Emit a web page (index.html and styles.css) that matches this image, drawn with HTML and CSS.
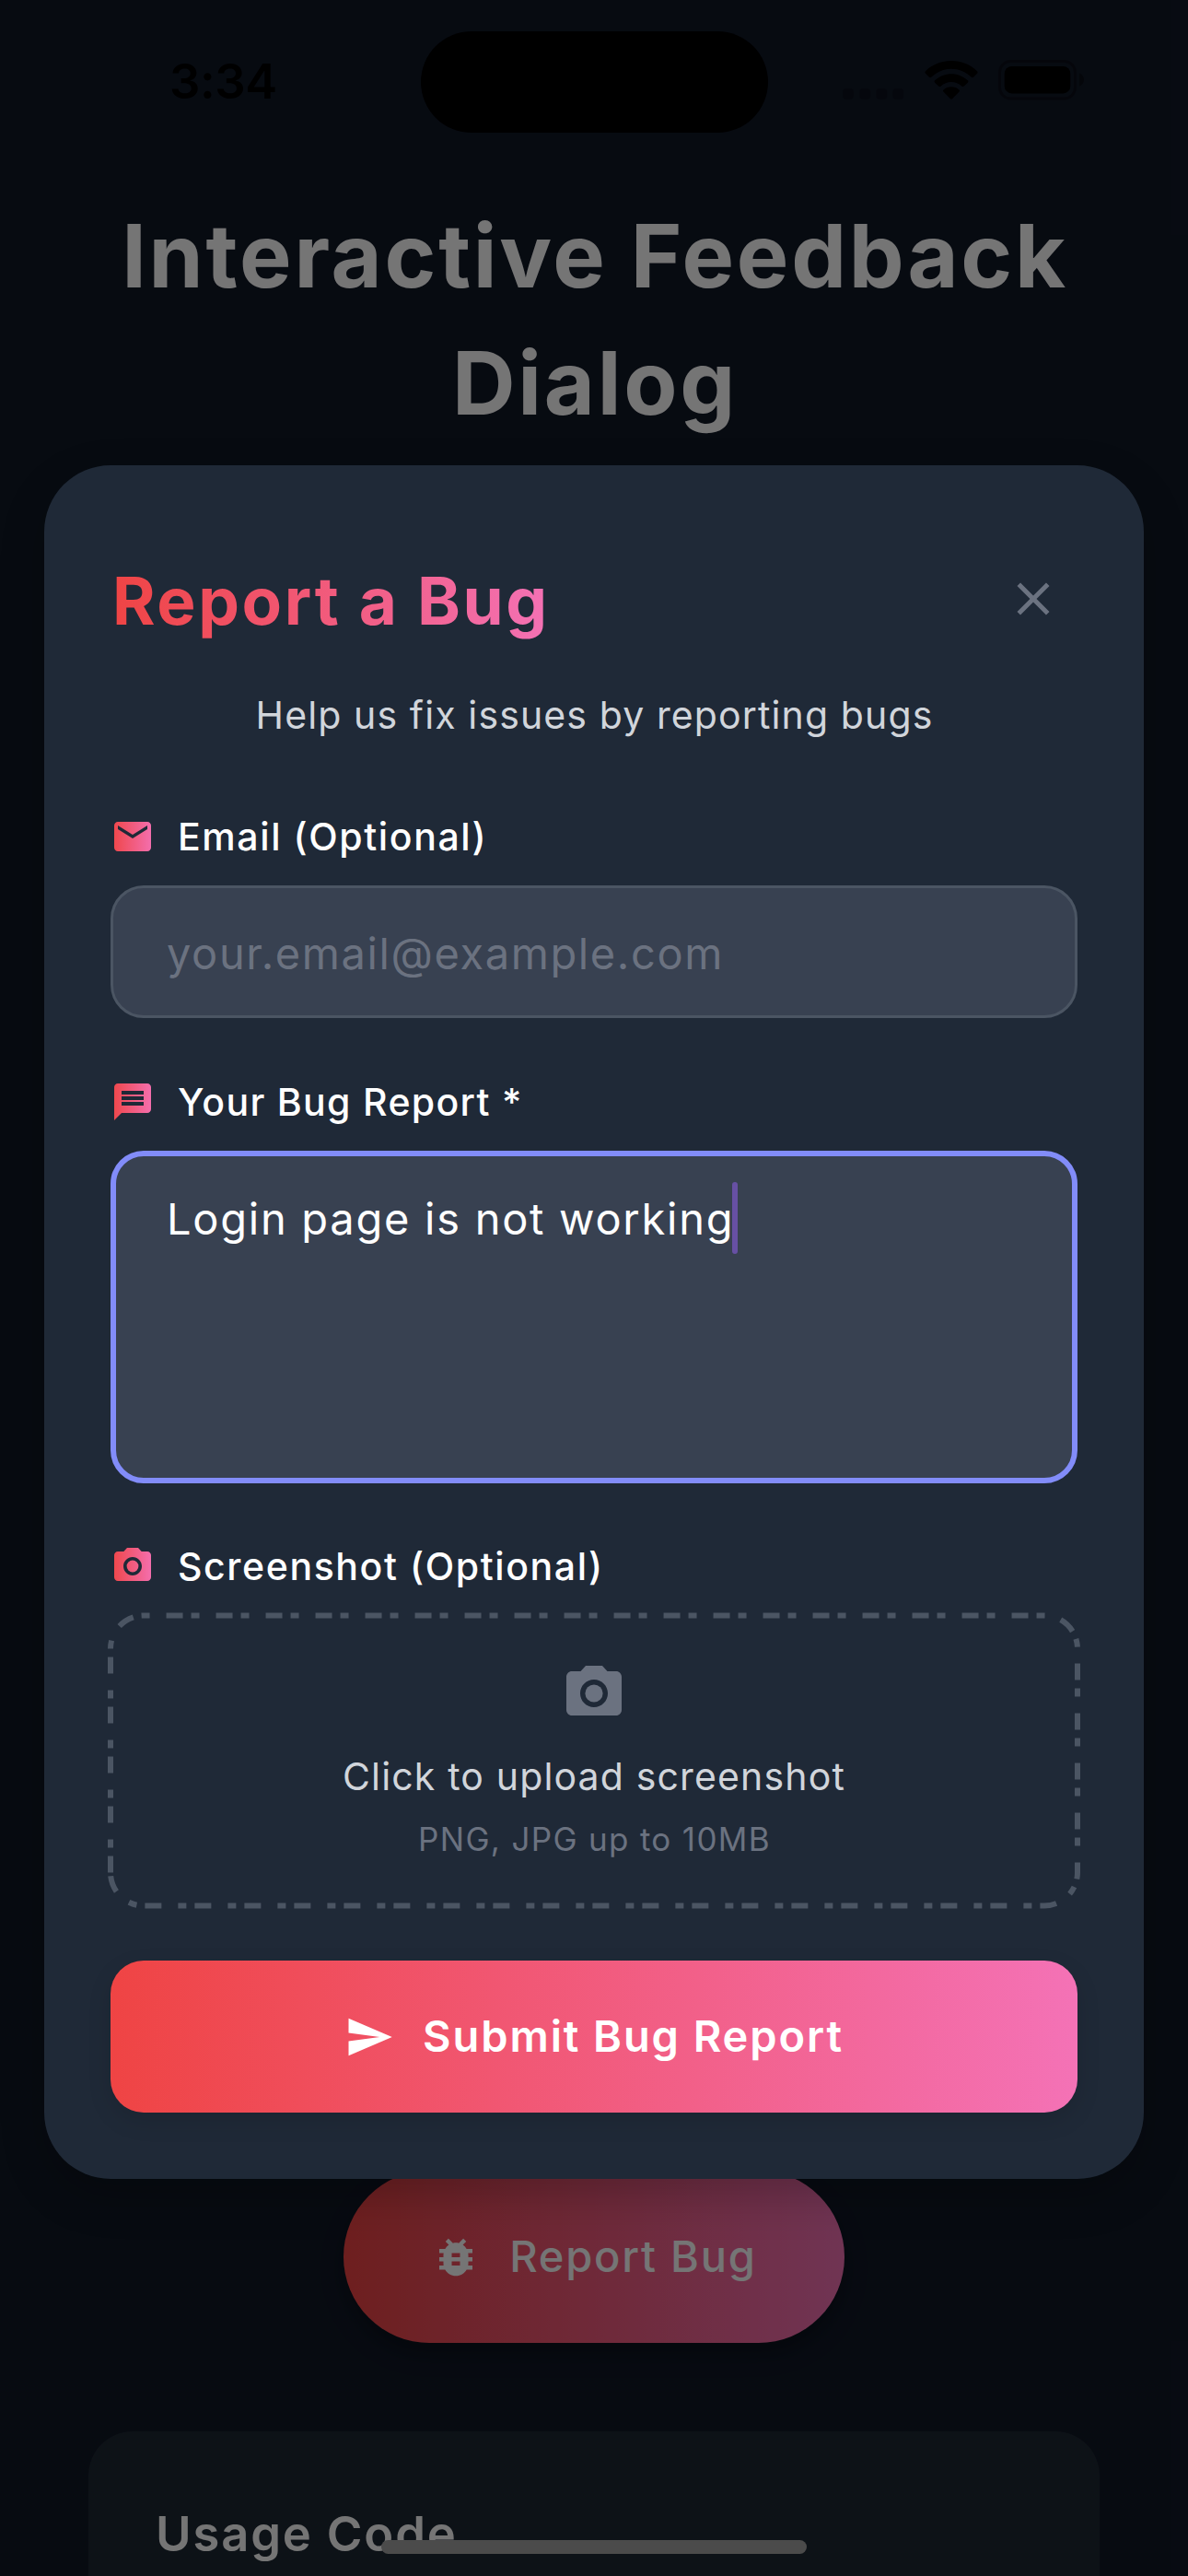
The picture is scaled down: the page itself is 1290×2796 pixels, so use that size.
FILE: index.html
```html
<!DOCTYPE html>
<html lang="en">
<head>
<meta charset="utf-8">
<title>Interactive Feedback Dialog</title>
<link rel="stylesheet" href="styles.css">
</head>
<body>
<svg class="defs" width="0" height="0" aria-hidden="true">
  <defs>
    <linearGradient id="accent" gradientUnits="userSpaceOnUse" x1="0" y1="0" x2="24" y2="0">
      <stop offset="0" stop-color="#ef4444"/>
      <stop offset="1" stop-color="#f472b6"/>
    </linearGradient>
    <symbol id="camera" viewBox="0 0 24 24">
      <circle cx="12" cy="12" r="3.2"/>
      <path d="M9 2L7.17 4H4c-1.1 0-2 .9-2 2v12c0 1.1.9 2 2 2h16c1.1 0 2-.9 2-2V6c0-1.1-.9-2-2-2h-3.17L15 2H9zm3 15c-2.76 0-5-2.24-5-5s2.24-5 5-5 5 2.24 5 5-2.24 5-5 5z"/>
    </symbol>
  </defs>
</svg>

<div class="screen">
  <main class="page">
    <header class="status-bar">
      <span class="time">3:34</span>
      <div class="island"></div>
      <div class="status-icons">
        <svg class="signal" viewBox="0 0 68 12" width="68" height="12"><rect x="0" y="0" width="12" height="12" rx="4"/><rect x="18.3" y="0" width="12" height="12" rx="4"/><rect x="36.3" y="0" width="12" height="12" rx="4"/><rect x="54.3" y="0" width="12" height="12" rx="4"/></svg>
        <svg class="wifi" viewBox="0 0 58 42" width="58" height="42">
          <path d="M29 0C40 0 50 4.300 57 11.200Q58.200 12.500 57 13.800L53 17.700Q51.800 18.700 50.500 17.600C44.500 12 37 8.800 29 8.800S13.500 12 7.500 17.600Q6.200 18.700 5 17.700L1 13.800Q-.2 12.500 1 11.200C8 4.300 18 0 29 0Z"/>
          <path d="M29 14.200C36 14.200 42 16.900 46.800 21.300Q48 22.500 46.800 23.700L42.800 27.600Q41.600 28.600 40.300 27.500C37.200 24.700 33.300 23 29 23S20.800 24.700 17.700 27.500Q16.400 28.600 15.200 27.600L11.200 23.700Q10 22.500 11.200 21.300C16 16.900 22 14.200 29 14.200Z"/>
          <path d="M29 28.300C32.300 28.300 35.200 29.500 37.400 31.400Q38.600 32.500 37.400 33.700L30 41.200Q29 42.100 28 41.200L20.600 33.700Q19.400 32.500 20.600 31.400C22.800 29.500 25.700 28.300 29 28.300Z"/>
        </svg>
        <svg class="battery" viewBox="0 0 94 44" width="94" height="44">
          <rect class="battery-shell" x="1.500" y="1.500" width="82" height="40.500" rx="12"/>
          <rect x="6.700" y="7" width="71.600" height="29.400" rx="8"/>
          <path class="battery-nub" d="M88 14.500c3.300 1 5 3.800 5 7s-1.700 6-5 7z"/>
        </svg>
      </div>
    </header>
    <h1 class="page-title">Interactive Feedback<br>Dialog</h1>
    <button class="bug-button">
      <svg viewBox="0 0 24 24" width="54" height="54" fill="currentColor"><path d="M20 8h-2.810c-.45-.78-1.070-1.450-1.820-1.960L17 4.410 15.590 3l-2.170 2.170C12.960 5.060 12.490 5 12 5c-.49 0-.96.06-1.410.17L8.410 3 7 4.410l1.620 1.630C7.880 6.550 7.260 7.220 6.810 8H4v2h2.090c-.05.33-.09.66-.09 1v1H4v2h2v1c0 .34.04.67.09 1H4v2h2.810c1.040 1.790 2.970 3 5.190 3s4.150-1.210 5.190-3H20v-2h-2.090c.05-.33.09-.66.09-1v-1h2v-2h-2v-1c0-.34-.04-.67-.09-1H20V8zm-6 8h-4v-2h4v2zm0-4h-4v-2h4v2z"/></svg>
      <span class="button-text">Report Bug</span>
    </button>
    <section class="usage-card">
      <h2 class="usage-title">Usage Code</h2>
    </section>
  </main>

  <div class="scrim">
    <section class="dialog">
      <header class="dialog-header">
        <h2 class="dialog-title">Report a Bug</h2>
        <button class="close"><svg viewBox="0 0 24 24" width="60" height="60" fill="currentColor"><path d="M19 6.410L17.590 5 12 10.590 6.410 5 5 6.410 10.590 12 5 17.590 6.410 19 12 13.410 17.590 19 19 17.590 13.410 12z"/></svg></button>
      </header>
      <p class="subtitle">Help us fix issues by reporting bugs</p>

      <div class="label label-email">
        <svg viewBox="0 0 24 24" width="48" height="48" fill="url(#accent)"><path d="M20 4H4c-1.100 0-1.990.9-1.990 2L2 18c0 1.100.9 2 2 2h16c1.100 0 2-.9 2-2V6c0-1.100-.9-2-2-2zm0 4l-8 5-8-5V6l8 5 8-5v2z"/></svg>
        <span>Email (Optional)</span>
      </div>
      <div class="field">your.email@example.com</div>

      <div class="label label-report">
        <svg viewBox="0 0 24 24" width="48" height="48" fill="url(#accent)"><path d="M20 2H4c-1.100 0-1.990.9-1.990 2L2 22l4-4h14c1.100 0 2-.9 2-2V4c0-1.100-.9-2-2-2zm-2 12H6v-2h12v2zm0-3H6V9h12v2zm0-3H6V6h12v2z"/></svg>
        <span>Your Bug Report *</span>
      </div>
      <div class="field field-report"><span>Login page is not working</span><i class="caret"></i></div>

      <div class="label label-shot">
        <svg viewBox="0 0 24 24" width="48" height="48" fill="url(#accent)"><use href="#camera"/></svg>
        <span>Screenshot (Optional)</span>
      </div>
      <div class="upload">
        <svg class="upload-outline" viewBox="0 0 1056 322" width="1056" height="322"><path d="M3 282.500V39.500A36 36 0 0 1 39 3.500H1017A36 36 0 0 1 1053 39.500V282.500A36 36 0 0 1 1017 318.500H39A36 36 0 0 1 3 282.500Z"/></svg>
        <svg class="upload-icon" viewBox="0 0 24 24" width="72" height="72"><use href="#camera"/></svg>
        <p class="upload-text">Click to upload screenshot</p>
        <p class="upload-hint">PNG, JPG up to 10MB</p>
      </div>

      <button class="submit">
        <svg viewBox="0 0 24 24" width="54" height="54" fill="currentColor"><path d="M2.010 21L23 12 2.010 3 2 10l15 2-15 2z"/></svg>
        <span class="button-text">Submit Bug Report</span>
      </button>
    </section>
  </div>
  <div class="home-indicator"></div>
</div>
</body>
</html>
```
FILE: styles.css
```css
* { box-sizing: border-box; }

body, h1, h2, p { margin: 0; }

body {
  background: #111827;
  font-family: Inter, "Liberation Sans", sans-serif;
}

button {
  border: 0;
  padding: 0;
  font-family: inherit;
}

svg { display: block; flex: none; }

.defs { position: absolute; }

.screen {
  position: relative;
  width: 1290px;
  height: 2796px;
  overflow: hidden;
}

/* Page behind the dialog */
.page {
  display: flex;
  flex-direction: column;
  height: 2796px;
  background: #111827;
  color: #fff;
}

.status-bar {
  display: grid;
  grid-template-columns: 457px 377px 456px;
  height: 209px;
  flex: none;
  align-items: start;
  color: #000;
}

.time {
  padding: 58px 0 0 184px;
  font-size: 52.5px;
  font-weight: 600;
  line-height: 60px;
  letter-spacing: -.4px;
}

.island {
  height: 110px;
  margin-top: 34px;
  border-radius: 55px;
  background: #000;
}

.status-icons {
  display: flex;
  padding: 65px 0 0 81px;
}

.signal { margin-top: 31px; opacity: .25; }
.wifi { margin: 1px 0 0 21px; }
.battery { margin-left: 22px; }
.battery-shell { fill: none; stroke: #000; stroke-width: 3px; opacity: .35; }
.battery-nub { opacity: .4; }

.page-title {
  flex: none;
  padding-left: 2px;
  font-size: 95px;
  font-weight: 700;
  line-height: 138px;
  letter-spacing: 2.75px;
  text-align: center;
}

.bug-button {
  display: flex;
  flex: none;
  align-self: center;
  align-items: center;
  justify-content: center;
  gap: 31px;
  width: 544px;
  height: 187px;
  margin-top: 1871px;
  border-radius: 94px;
  background: linear-gradient(90deg, #ef4444, #f472b6);
  box-shadow: 0 12px 24px rgba(0, 0, 0, .3);
  color: #fff;
  font-size: 47px;
  font-weight: 500;
  letter-spacing: 1.78px;
}

.button-text {
  padding-bottom: 2px;
  line-height: 56px;
}

.usage-card {
  flex: none;
  height: 220px;
  margin: 96px 96px 0;
  padding: 78px 72px;
  border-radius: 48px;
  background: #1e2834;
}

.usage-title {
  padding-left: 1px;
  font-size: 52.5px;
  font-weight: 600;
  line-height: 66px;
  letter-spacing: 1.85px;
}

.home-indicator {
  position: absolute;
  top: 2757px;
  left: 414px;
  width: 462px;
  height: 15px;
  border-radius: 8px;
  background: #4b4b4b;
}

/* Modal layer */
.scrim {
  position: absolute;
  inset: 0;
  padding: 505px 48px 0;
  background: rgba(0, 0, 0, .54);
}

.dialog {
  display: flex;
  flex-direction: column;
  height: 1860px;
  padding: 97px 72px 71px;
  border-radius: 72px;
  background: #1f2937;
  box-shadow: 0 18px 48px rgba(0, 0, 0, .22);
}

.dialog-header {
  display: flex;
  align-items: center;
  justify-content: space-between;
  height: 96px;
}

.dialog-title {
  padding: 3px 4px 0 2px;
  background: linear-gradient(90deg, #ef4444, #f472b6);
  -webkit-background-clip: text;
  background-clip: text;
  color: transparent;
  font-size: 71px;
  font-weight: 700;
  line-height: 96px;
  letter-spacing: 2.6px;
}

.close {
  display: flex;
  align-items: center;
  justify-content: center;
  width: 96px;
  height: 96px;
  background: none;
  color: #6b7280;
}

.subtitle {
  margin-top: 48px;
  padding-left: 1px;
  color: #d1d5db;
  font-size: 41px;
  line-height: 60px;
  letter-spacing: 1.12px;
  text-align: center;
}

.label {
  display: flex;
  align-items: center;
  gap: 25px;
  height: 48px;
  color: #fff;
  font-size: 41px;
  font-weight: 500;
  line-height: 48px;
  letter-spacing: 1.6px;
}

.label-email { margin-top: 78px; }
.label-report { margin-top: 67px; letter-spacing: 1.33px; }
.label-shot { margin-top: 66px; }

.field {
  height: 144px;
  margin-top: 29px;
  padding: 34px 57px 0 58px;
  border: 3px solid #4b5563;
  border-radius: 36px;
  background: #384151;
  color: #6b7280;
  font-size: 47px;
  line-height: 74px;
  letter-spacing: 1.6px;
}

.field-report {
  display: flex;
  height: 361px;
  padding: 29px 54px 0 55px;
  border: 6px solid #828cf9;
  color: #fff;
  line-height: 78px;
  letter-spacing: 1.73px;
}

.caret {
  width: 6px;
  height: 78px;
  margin: -1px 0 0 -2px;
  border-radius: 3px;
  background: #6750a4;
}

.upload {
  position: relative;
  display: flex;
  flex-direction: column;
  align-items: center;
  height: 316px;
  margin-top: 29px;
  padding-top: 49px;
}

.upload-outline {
  position: absolute;
  top: -3px;
  left: -3px;
  fill: none;
  stroke: #4b5563;
  stroke-width: 6px;
  stroke-dasharray: 18 9 9 18;
}

.upload-icon { fill: #6b7280; }

.upload-text {
  margin-top: 24px;
  color: #d1d5db;
  font-size: 41px;
  line-height: 60px;
  letter-spacing: 1.15px;
}

.upload-hint {
  margin-top: 14px;
  padding-left: 1px;
  color: #6b7280;
  font-size: 35px;
  line-height: 48px;
  letter-spacing: 1.32px;
}

.submit {
  display: flex;
  flex: none;
  align-items: center;
  justify-content: center;
  gap: 31px;
  height: 165px;
  margin-top: 59px;
  border-radius: 36px;
  background: linear-gradient(90deg, #ef4444, #f472b6);
  box-shadow: 0 9px 27px rgba(0, 0, 0, .11);
  color: #fff;
  font-size: 47px;
  font-weight: 600;
  letter-spacing: 1.9px;
}
```
